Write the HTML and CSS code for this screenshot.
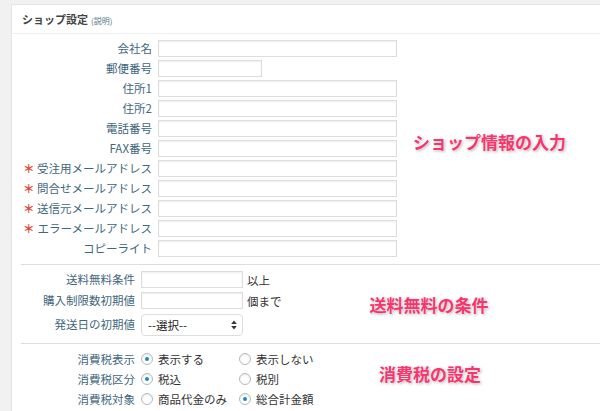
FILE: index.html
```html
<!DOCTYPE html>
<html lang="ja">
<head>
    <meta charset="UTF-8">
    <title>ショップ設定</title>
    <link rel="stylesheet" href="styles.css">
</head>
<body>
    <div class="panel">
        <div class="panel-header">
            <span class="panel-title">ショップ設定</span>
            <span class="panel-help">(説明)</span>
        </div>

        <!-- shop info -->
        <div class="section section-shop">
            <div class="form-grid wide">
                <label class="field-label">会社名</label><div class="text-input long"></div>
                <label class="field-label">郵便番号</label><div class="text-input short"></div>
                <label class="field-label">住所1</label><div class="text-input long"></div>
                <label class="field-label">住所2</label><div class="text-input long"></div>
                <label class="field-label">電話番号</label><div class="text-input long"></div>
                <label class="field-label">FAX番号</label><div class="text-input long"></div>
                <label class="field-label required">受注用メールアドレス</label><div class="text-input long"></div>
                <label class="field-label required">問合せメールアドレス</label><div class="text-input long"></div>
                <label class="field-label required">送信元メールアドレス</label><div class="text-input long"></div>
                <label class="field-label required">エラーメールアドレス</label><div class="text-input long"></div>
                <label class="field-label">コピーライト</label><div class="text-input long"></div>
            </div>
            <div class="note note-shop">ショップ情報の入力</div>
        </div>

        <!-- shipping -->
        <div class="section section-ship">
            <div class="form-grid narrow">
                <label class="field-label">送料無料条件</label>
                <div class="field-line"><div class="text-input small"></div><span class="suffix">以上</span></div>
                <label class="field-label">購入制限数初期値</label>
                <div class="field-line"><div class="text-input small"></div><span class="suffix">個まで</span></div>
                <label class="field-label">発送日の初期値</label>
                <div class="field-line">
                    <div class="select-box">
                        <span>--選択--</span>
                        <svg width="6" height="10" viewBox="0 0 6 10"><path d="M3 0.5 L5.8 4 L0.2 4 Z M3 9.5 L5.8 6 L0.2 6 Z" fill="#333"/></svg>
                    </div>
                </div>
            </div>
            <div class="note note-ship">送料無料の条件</div>
        </div>

        <!-- tax -->
        <div class="section section-tax">
            <div class="form-grid tax">
                <label class="field-label">消費税表示</label>
                <div class="radio-line">
                    <span class="radio-option"><span class="radio checked"></span>表示する</span>
                    <span class="radio-option"><span class="radio"></span>表示しない</span>
                </div>
                <label class="field-label">消費税区分</label>
                <div class="radio-line">
                    <span class="radio-option"><span class="radio checked"></span>税込</span>
                    <span class="radio-option"><span class="radio"></span>税別</span>
                </div>
                <label class="field-label">消費税対象</label>
                <div class="radio-line">
                    <span class="radio-option"><span class="radio"></span>商品代金のみ</span>
                    <span class="radio-option"><span class="radio checked"></span>総合計金額</span>
                </div>
            </div>
            <div class="note note-tax">消費税の設定</div>
        </div>
    </div>
</body>
</html>
```

FILE: styles.css
```css
body {
    margin: 0;
    padding: 0;
    background-color: #f1f1f1;
    font-family: "Noto Sans CJK JP", "Noto Sans", sans-serif;
    font-size: 11.5px;
    color: #333333;
    overflow: hidden;
}
.panel {
    margin: 4px 0 0 11px;
    background-color: #ffffff;
    border: 1px solid #e5e5e5;
    border-right: none;
    height: 420px;
}
.panel-header {
    height: 28px;
    display: flex;
    align-items: center;
    padding-left: 10px;
    border-bottom: 1px solid #eeeeee;
}
.panel-title {
    font-weight: bold;
    font-size: 11px;
    color: #444444;
}
.panel-help {
    font-size: 8px;
    color: #55748a;
    margin-left: 3px;
    margin-top: 2px;
}
.section {
    margin-left: 9px;
    display: flex;
    align-items: center;
    border-bottom: 1px solid #dddddd;
}
.section-shop {
    padding: 6px 0 7px;
}
.section-ship {
    padding: 6px 0 7px;
}
.section-tax {
    padding: 5px 0 8px;
    border-bottom: none;
    align-items: flex-start;
}
.form-grid {
    display: grid;
    align-items: center;
}
.form-grid.wide {
    grid-template-columns: 131px auto;
    column-gap: 6px;
    row-gap: 3px;
}
.form-grid.narrow {
    grid-template-columns: 114px auto;
    column-gap: 6px;
    row-gap: 4px;
}
.form-grid.tax {
    grid-template-columns: 114px auto;
    column-gap: 6px;
    grid-auto-rows: 20px;
}
.field-label {
    text-align: right;
    color: #41677d;
    white-space: nowrap;
    line-height: 17px;
}
.field-label.required::before {
    content: "＊";
    color: #e2483c;
    font-weight: bold;
    float: left;
    margin-left: 2px;
}
.text-input {
    height: 17px;
    box-sizing: border-box;
    border: 1px solid #dddddd;
    box-shadow: inset 0 1px 2px rgba(0, 0, 0, 0.07);
    background-color: #ffffff;
}
.text-input.long {
    width: 239px;
}
.text-input.short {
    width: 104px;
}
.text-input.small {
    width: 102px;
}
.field-line {
    display: flex;
    align-items: center;
}
.suffix {
    margin-left: 4px;
    color: #333333;
}
.select-box {
    width: 102px;
    height: 22px;
    box-sizing: border-box;
    border: 1px solid #dddddd;
    border-radius: 4px;
    display: flex;
    align-items: center;
    justify-content: space-between;
    padding: 0 5px 0 6px;
    color: #222222;
    margin-top: 1px;
}
.radio-line {
    display: flex;
    align-items: center;
}
.radio-option {
    width: 98px;
    display: flex;
    align-items: center;
    white-space: nowrap;
}
.radio {
    width: 12px;
    height: 12px;
    box-sizing: border-box;
    border: 1px solid #b4b9be;
    border-radius: 50%;
    margin-right: 5px;
    display: flex;
    align-items: center;
    justify-content: center;
    box-shadow: inset 0 1px 2px rgba(0, 0, 0, 0.1);
}
.radio.checked::after {
    content: "";
    width: 4px;
    height: 4px;
    border-radius: 50%;
    background-color: #1e8cbe;
}
.note {
    font-size: 17px;
    font-weight: bold;
    color: #f6356f;
    text-shadow: 0 0 2px #ffffff, 1px 1px 3px rgba(0, 0, 0, 0.35);
    white-space: nowrap;
}
.note-shop {
    margin-left: 16px;
    margin-top: -14px;
}
.note-ship {
    margin-left: 88px;
    margin-top: 2px;
}
.note-tax {
    margin-left: 42px;
    margin-top: 12px;
}
```
